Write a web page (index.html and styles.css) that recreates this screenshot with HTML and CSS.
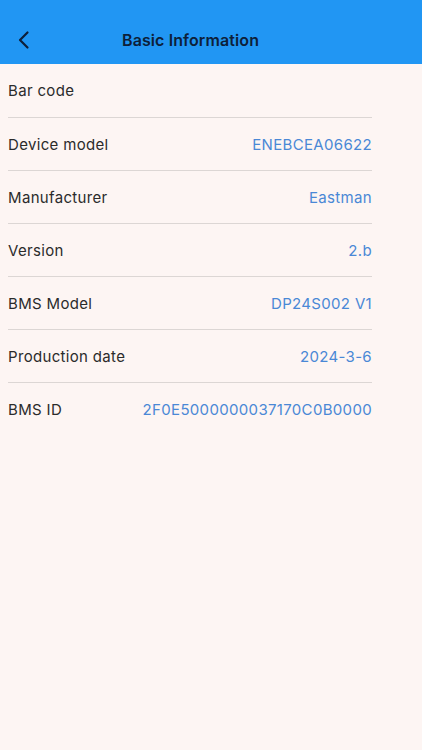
FILE: index.html
```html
<!DOCTYPE html>
<html lang="en">
<head>
  <meta charset="UTF-8">
  <title>Basic Information</title>
  <meta name="viewport" content="width=device-width, initial-scale=1.0">
  <link rel="stylesheet" href="styles.css">
</head>
<body>
  <nav>
    <a class="back" href="#">
      <svg width="14" height="20" viewBox="0 0 14 20"><path d="M10.5 2.5 L3 10 L10.5 17.5" fill="none" stroke="#0d1f3a" stroke-width="2.2" stroke-linecap="round" stroke-linejoin="round"/></svg>
    </a>
    <h1>Basic Information</h1>
  </nav>
  <div class="list">
    <div class="row"><span class="label">Bar code</span><span class="value"></span></div>
    <div class="row"><span class="label">Device model</span><span class="value">ENEBCEA06622</span></div>
    <div class="row"><span class="label">Manufacturer</span><span class="value">Eastman</span></div>
    <div class="row"><span class="label">Version</span><span class="value">2.b</span></div>
    <div class="row"><span class="label">BMS Model</span><span class="value">DP24S002 V1</span></div>
    <div class="row"><span class="label">Production date</span><span class="value">2024-3-6</span></div>
    <div class="row last"><span class="label">BMS ID</span><span class="value">2F0E5000000037170C0B0000</span></div>
  </div>
</body>
</html>
```

FILE: styles.css
```css
body {
  font-family: Inter, 'Noto Sans', sans-serif;
  background-color: #fdf5f3;
  margin: 0;
  padding: 0;
}
nav {
  background-color: #2196f3;
  height: 48px;
  padding-top: 16px;
  display: flex;
  align-items: center;
  position: relative;
}
nav .back {
  display: flex;
  margin-left: 17px;
}
nav h1 {
  margin: 0;
  font-size: 16px;
  font-weight: 600;
  color: #0d1f3a;
  position: absolute;
  left: 122px;
  top: 30px;
  letter-spacing: 0.1px;
}
.list {
  margin-left: 8px;
  width: 364px;
}
.row {
  display: flex;
  justify-content: space-between;
  align-items: center;
  height: 52px;
  border-bottom: 1px solid #dcd6d4;
  font-size: 15px;
  letter-spacing: 0.33px;
}
.row:first-child {
  height: 53px;
}
.row.last {
  border-bottom: none;
}
.label {
  color: #2b2b2b;
}
.value {
  color: #4a88d6;
}
```
